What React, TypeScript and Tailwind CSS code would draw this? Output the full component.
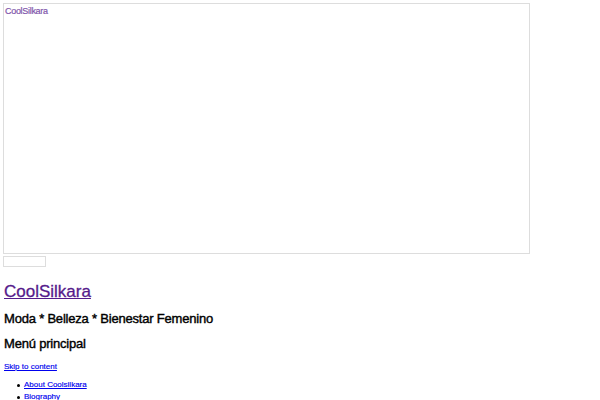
export default function App() {
  return (
    <div className="min-h-[400px] bg-white font-['Liberation_Sans',Arial,sans-serif] text-black">
      <div className="ml-[3px] mt-[3px] h-[251px] w-[527px] border border-[#dddddd] px-[1px] pt-[2px] text-[9px] leading-[10px]">
        <span className="tracking-[-0.3px] text-[#7f55ab] [-webkit-text-stroke:0.2px_#7f55ab]">CoolSilkara</span>
      </div>
      <div className="ml-[3px] mt-[2px] h-[11px] w-[43px] border border-[#dddddd]"></div>
      <h1 className="ml-[4px] mt-[15px] text-[17px] leading-[20px] [-webkit-text-stroke:0.3px_#551a8b]">
        <a href="#" className="text-[#551a8b] underline">
          CoolSilkara
        </a>
      </h1>
      <h2 className="ml-[4px] mt-[9px] text-[13px] leading-[16px] tracking-[-0.2px] [-webkit-text-stroke:0.4px_#000]">
        Moda * Belleza * Bienestar Femenino
      </h2>
      <h2 className="ml-[4px] mt-[9px] text-[13px] leading-[16px] tracking-[-0.2px] [-webkit-text-stroke:0.4px_#000]">
        Menú principal
      </h2>
      <a
        href="#"
        className="ml-[4px] mt-[10px] block text-[8px] leading-[10px] text-[#0000ee] underline [-webkit-text-stroke:0.15px_#0000ee]"
      >
        Skip to content
      </a>
      <ul className="mt-[7px] text-[8px] leading-[12px]">
        {["About Coolsilkara", "Biography"].map((item) => (
          <li key={item} className="flex items-center">
            <span className="ml-[17px] mr-[4px] h-[3px] w-[3px] rounded-full bg-black"></span>
            <a href="#" className="text-[#0000ee] underline [-webkit-text-stroke:0.15px_#0000ee]">
              {item}
            </a>
          </li>
        ))}
      </ul>
    </div>
  );
}
